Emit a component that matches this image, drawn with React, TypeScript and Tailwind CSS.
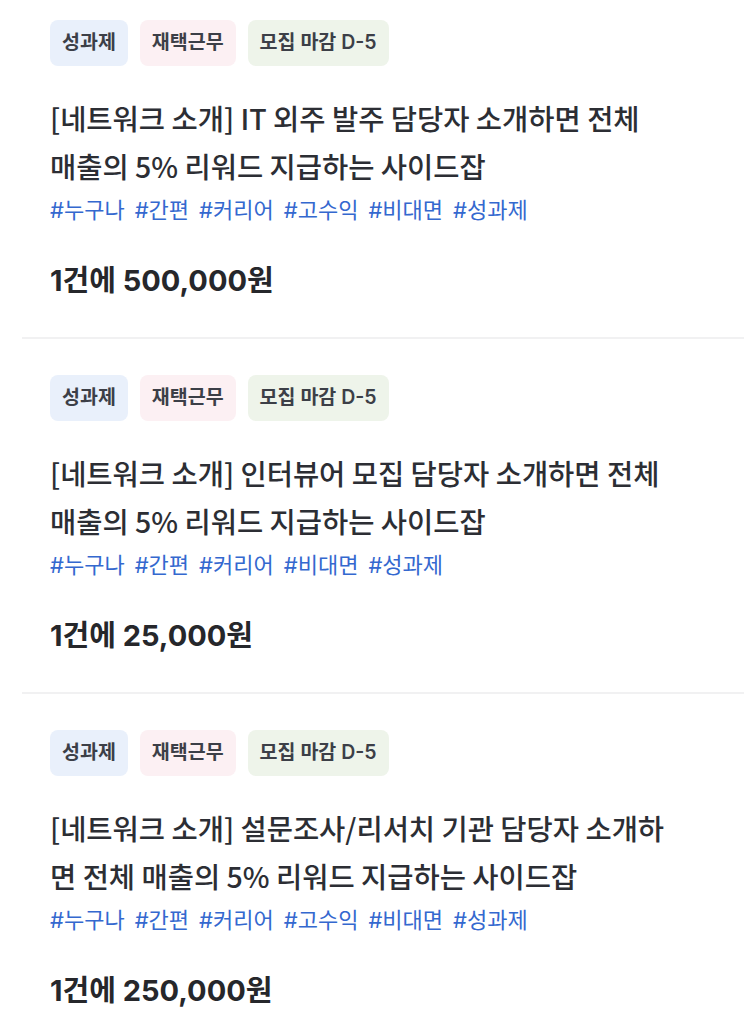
import React from "react";

type Item = {
  title: string;
  tags: string[];
  price: string;
};

const items: Item[] = [
  {
    title: "[네트워크 소개] IT 외주 발주 담당자 소개하면 전체 매출의 5% 리워드 지급하는 사이드잡",
    tags: ["#누구나", "#간편", "#커리어", "#고수익", "#비대면", "#성과제"],
    price: "1건에 500,000원",
  },
  {
    title: "[네트워크 소개] 인터뷰어 모집 담당자 소개하면 전체 매출의 5% 리워드 지급하는 사이드잡",
    tags: ["#누구나", "#간편", "#커리어", "#비대면", "#성과제"],
    price: "1건에 25,000원",
  },
  {
    title: "[네트워크 소개] 설문조사/리서치 기관 담당자 소개하면 전체 매출의 5% 리워드 지급하는 사이드잡",
    tags: ["#누구나", "#간편", "#커리어", "#고수익", "#비대면", "#성과제"],
    price: "1건에 250,000원",
  },
];

const noto = { fontFamily: '"Noto Sans CJK KR", "Noto Sans", sans-serif' };

function Card({ item, first }: { item: Item; first: boolean }) {
  return (
    <div
      className={`ml-[22px] pl-[28px] pb-[38px] border-b-2 border-[#f1f1f2] ${
        first ? "pt-[20px]" : "pt-[36px]"
      }`}
    >
      <div className="flex gap-3">
        <span className="h-[46px] flex items-center px-3 rounded-lg bg-[#e9f0fb] text-[19.5px] font-semibold text-[#3c3f47]">
          성과제
        </span>
        <span className="h-[46px] flex items-center px-3 rounded-lg bg-[#fcf0f3] text-[19.5px] font-semibold text-[#3c3f47]">
          재택근무
        </span>
        <span className="h-[46px] flex items-center px-3 rounded-lg bg-[#eef4ea] text-[19.5px] font-semibold text-[#3c3f47]">
          모집 마감 D-5
        </span>
      </div>
      <div
        className="mt-[28px] w-[620px] text-[28.5px] leading-[48px] font-medium text-[#2c2e34] break-all"
        style={noto}
      >
        {item.title}
      </div>
      <div className="mt-[6px] flex gap-[10px] text-[22px] leading-[28px] text-[#3468cf]">
        {item.tags.map((t) => (
          <span key={t}>{t}</span>
        ))}
      </div>
      <div className="mt-[39px] text-[29px] leading-[36px] font-bold text-[#26272b]">
        {item.price}
      </div>
    </div>
  );
}

export default function App() {
  return (
    <div
      className="w-[744px] h-[1026px] overflow-hidden bg-white"
      style={{ fontFamily: 'Inter, "Noto Sans CJK KR", "Noto Sans", sans-serif' }}
    >
      {items.map((it, i) => (
        <Card key={i} item={it} first={i === 0} />
      ))}
    </div>
  );
}
